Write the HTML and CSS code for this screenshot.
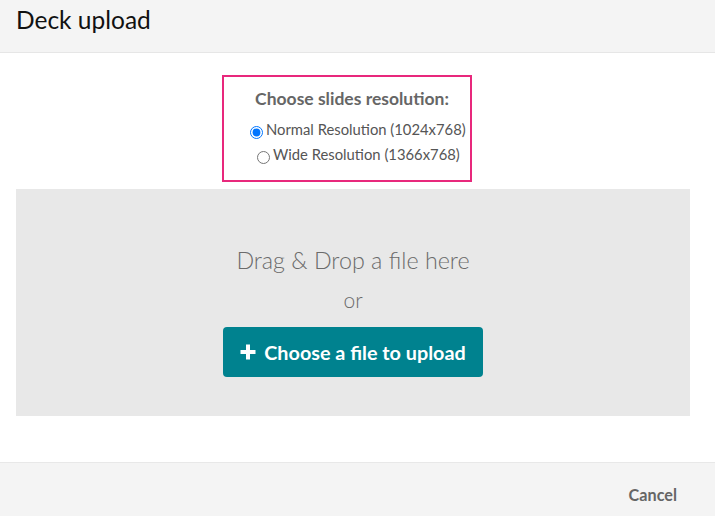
FILE: index.html
```html
<!DOCTYPE html>
<html>
<head>
<meta charset="utf-8">
<link rel="stylesheet" href="styles.css">
</head>
<body>
<div class="dialog">
  <header class="head"><h1 class="title">Deck upload</h1></header>
  <main class="content">
    <div class="res-box">
      <div class="res-title">Choose slides resolution:</div>
      <label class="res-opt opt-normal"><input type="radio" name="res" checked>Normal Resolution (1024x768)</label>
      <label class="res-opt opt-wide"><input type="radio" name="res">Wide Resolution (1366x768)</label>
    </div>
    <div class="drop">
      <div class="drop-text">Drag &amp; Drop a file here</div>
      <div class="drop-or">or</div>
      <button class="upload-btn"><svg class="plus" width="16" height="16" viewBox="0 0 16 16"><path d="M6 0.5h4v5.5h5.5v4H10v5.5H6V10H0.5V6H6z" fill="#fff"/></svg>Choose a file to upload</button>
    </div>
  </main>
  <footer class="foot"><button class="cancel">Cancel</button></footer>
</div>
</body>
</html>
```
FILE: styles.css
```css
* { box-sizing: border-box; }
html, body { margin: 0; padding: 0; }
body { font-family: Lato, "Open Sans", sans-serif; background: #fff; width: 715px; height: 516px; overflow: hidden; }
.dialog { display: flex; flex-direction: column; height: 516px; }
.head { height: 53px; background: #f4f4f4; border-bottom: 1px solid #e6e6e6; padding: 5px 16px 0; }
.title { margin: 0; font-weight: 400; font-size: 24.5px; line-height: 30px; color: #111; }
.content { flex: 1; padding: 22px 25px 0 16px; }
.res-box { width: 250px; height: 107px; margin-left: 206px; border: 2px solid #e8287c; padding: 11px 0 0; color: #555; }
.res-title { font-weight: 700; font-size: 17.5px; color: #666; line-height: 22px; margin-bottom: 7px; text-align: center; padding-left: 10px; }
.res-opt { display: block; font-size: 14.8px; line-height: 25px; color: #555; white-space: nowrap; }
.opt-normal { padding-left: 26px; }
.opt-wide { padding-left: 33px; }
.res-opt input { margin: 0 3px 0 0; width: 13px; height: 13px; vertical-align: -4px; }
.drop { margin-top: 7px; height: 227px; background: #e8e8e8; display: flex; flex-direction: column; align-items: center; padding-top: 56px; }
.drop-text { font-weight: 300; font-size: 23.3px; line-height: 30px; color: #6b6b6b; }
.drop-or { font-weight: 300; font-size: 21px; line-height: 26px; color: #6b6b6b; margin-top: 12px; }
.upload-btn { margin-top: 14px; width: 260px; height: 50px; border: 0; border-radius: 4px; background: #00828f; color: #fff; font-family: Lato, sans-serif; font-weight: 700; font-size: 19.8px; display: flex; align-items: center; justify-content: center; gap: 8px; padding: 0 0 0 0; }
.plus { flex: none; }
.foot { height: 54px; background: #f4f4f4; border-top: 1px solid #e8e8e8; display: flex; justify-content: flex-end; align-items: center; padding: 10px 38px 0 0; margin-top: auto; }
.cancel { border: 0; background: none; font-family: Lato, sans-serif; font-weight: 700; font-size: 16.2px; color: #666; padding: 0; }
```
